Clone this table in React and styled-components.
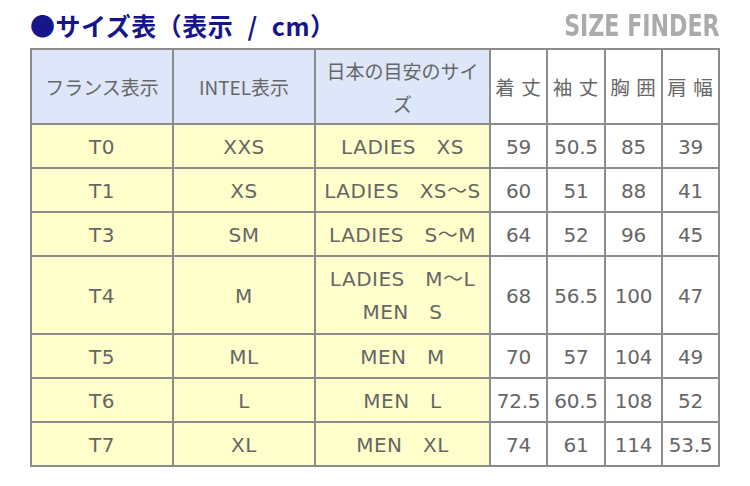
import React from "react";
import styled, { createGlobalStyle } from "styled-components";

const GlobalStyle = createGlobalStyle`
  body {
    margin: 0;
    background: #fff;
    font-family: "Noto Sans CJK JP", "Noto Sans", sans-serif;
  }
`;

const rows = [
  { fr: "T0", intel: "XXS", jp: ["LADIES　XS"], v: ["59", "50.5", "85", "39"] },
  { fr: "T1", intel: "XS", jp: ["LADIES　XS〜S"], v: ["60", "51", "88", "41"] },
  { fr: "T3", intel: "SM", jp: ["LADIES　S〜M"], v: ["64", "52", "96", "45"] },
  { fr: "T4", intel: "M", jp: ["LADIES　M〜L", "MEN　S"], v: ["68", "56.5", "100", "47"] },
  { fr: "T5", intel: "ML", jp: ["MEN　M"], v: ["70", "57", "104", "49"] },
  { fr: "T6", intel: "L", jp: ["MEN　L"], v: ["72.5", "60.5", "108", "52"] },
  { fr: "T7", intel: "XL", jp: ["MEN　XL"], v: ["74", "61", "114", "53.5"] },
];

function App() {
  return (
    <Page>
      <GlobalStyle />
      <TitleRow>
        <Title>●サイズ表（表示 / cm）</Title>
        <Brand>SIZE FINDER</Brand>
      </TitleRow>
      <Table>
        <colgroup>
          <col style={{ width: 142 }} />
          <col style={{ width: 142 }} />
          <col style={{ width: 175 }} />
          <col style={{ width: 57 }} />
          <col style={{ width: 58 }} />
          <col style={{ width: 57 }} />
          <col style={{ width: 57 }} />
        </colgroup>
        <thead>
          <tr>
            <Head>フランス表示</Head>
            <Head>INTEL表示</Head>
            <Head>日本の目安のサイズ</Head>
            <Measure>着 丈</Measure>
            <Measure>袖 丈</Measure>
            <Measure>胸 囲</Measure>
            <Measure>肩 幅</Measure>
          </tr>
        </thead>
        <tbody>
          {rows.map((r) => (
            <Row key={r.fr} $tall={r.jp.length > 1}>
              <Label>{r.fr}</Label>
              <Label>{r.intel}</Label>
              <Label>
                {r.jp.map((line) => (
                  <div key={line}>{line}</div>
                ))}
              </Label>
              {r.v.map((n, i) => (
                <Num key={i}>{n}</Num>
              ))}
            </Row>
          ))}
        </tbody>
      </Table>
    </Page>
  );
}

export default App;

const Page = styled.div`
  width: 690px;
  padding: 4px 0 0 30px;
`;

const TitleRow = styled.div`
  display: flex;
  justify-content: space-between;
  align-items: flex-end;
  height: 40px;
  margin-bottom: 4px;
`;

const Title = styled.h2`
  margin: 0;
  font-size: 25px;
  font-weight: 700;
  color: #16168a;
  line-height: 38px;
  letter-spacing: 0.5px;
  word-spacing: 8px;
`;

const Brand = styled.div`
  font-family: "DejaVu Sans Condensed", "DejaVu Sans", sans-serif;
  font-stretch: condensed;
  font-weight: 700;
  font-size: 30px;
  color: #ababab;
  line-height: 36px;
  transform: scaleX(0.82);
  transform-origin: right center;
  filter: blur(0.4px);
`;

const Table = styled.table`
  border-collapse: collapse;
  table-layout: fixed;
  width: 690px;
  color: #666;
  font-family: "DejaVu Sans", "Noto Sans CJK JP", sans-serif;
  font-size: 20px;

  td,
  th {
    border: 2px solid #8c8c8c;
    padding: 0;
    text-align: center;
    vertical-align: middle;
    font-weight: 400;
  }
`;

const Head = styled.th`
  background: #dde7f9;
  font-family: "Noto Sans CJK JP", sans-serif;
  font-size: 19px;
  line-height: 33px;
  height: 73px;
  padding: 0 4px !important;
`;

const Measure = styled.th`
  background: #fff;
  font-family: "Noto Sans CJK JP", sans-serif;
  font-size: 19.5px;
  line-height: 33px;
  letter-spacing: 1px;
`;

const Row = styled.tr`
  height: ${(p) => (p.$tall ? "78px" : "44px")};
`;

const Label = styled.td`
  background: #ffffcc;
  line-height: 33px;
  white-space: nowrap;
  letter-spacing: 0.5px;
  padding-top: 2px !important;
`;

const Num = styled.td`
  background: #fff;
  line-height: 33px;
  white-space: nowrap;
  letter-spacing: -0.3px;
  padding-top: 2px !important;
`;
